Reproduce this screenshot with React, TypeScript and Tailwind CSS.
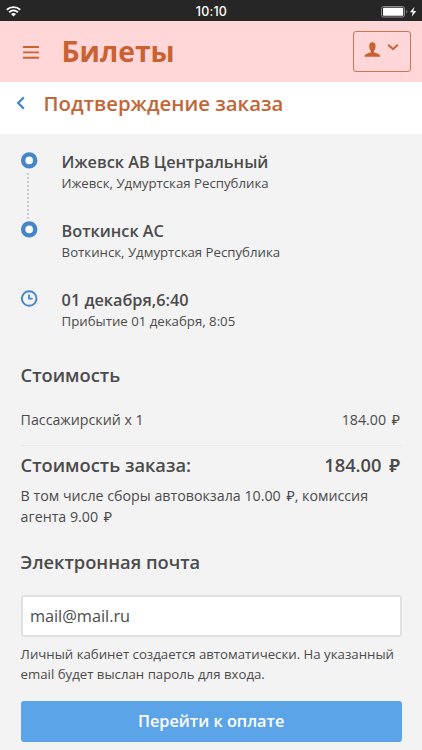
import type { ReactNode } from 'react';

function Stop({ title, subtitle, icon, line }: { title: string; subtitle: string; icon: ReactNode; line?: boolean }) {
  return (
    <div className="flex h-[69.3px]">
      <div className="flex w-[41px] shrink-0 flex-col items-start">
        {icon}
        {line && <div className="ml-[6.5px] mt-[4px] h-[46px] border-l-2 border-dotted border-[#cfcccb]" />}
      </div>
      <div>
        <h3 className="h-[21px] whitespace-nowrap text-[16.25px] font-semibold leading-[21px]">{title}</h3>
        <p className="h-[20px] whitespace-nowrap text-[13.23px] leading-[20px]">{subtitle}</p>
      </div>
    </div>
  );
}

const ring = (
  <svg className="size-[17px] shrink-0" viewBox="0 0 17 17">
    <circle cx="8.2" cy="8.4" r="6" fill="white" stroke="#4486c8" strokeWidth="4.4" />
  </svg>
);

const clock = (
  <svg className="size-[17px]" viewBox="0 0 17 17" fill="none" stroke="#4486c8">
    <circle cx="8.2" cy="8.5" r="7.3" strokeWidth="1.9" />
    <path d="M8 4.6V8.7H11.6" strokeWidth="1.8" />
  </svg>
);

export default function App() {
  return (
    <div className="flex h-[750px] w-[422px] flex-col overflow-hidden bg-[#f3f3f3] font-['Open_Sans','Noto_Sans',sans-serif] text-[#4b4b4b]">
      <div className="grid h-[21px] shrink-0 grid-cols-3 items-center bg-[#262626] text-white">
        <svg className="ml-[6px] h-[11px] w-[15px]" viewBox="0 0 15 11" fill="none" stroke="white">
          <path d="M.8 3.7C4.7.3 10.3.3 14.2 3.7" strokeWidth="1.9" />
          <path d="M3.1 6.2C5.7 4 9.3 4 11.9 6.2" strokeWidth="1.8" />
          <path d="M5 8C6.5 6.7 8.5 6.7 10 8L7.5 10.6Z" fill="white" stroke="none" />
        </svg>
        <span className="pl-px pt-px text-center font-[Inter,sans-serif] text-[12.5px] font-medium leading-[21px] tracking-[0.2px]">10:10</span>
        <svg className="ml-auto mr-[3px] h-[13px] w-[41px]" viewBox="0 0 41 13">
          <rect x="3.5" y="1.5" width="23" height="10.5" rx="2" fill="none" stroke="#8b8b8b" />
          <rect x="5" y="2.8" width="20.2" height="7.9" rx=".7" fill="white" />
          <path d="M28.3 5v3.4q1-.5 1-1.7t-1-1.7" fill="#8b8b8b" />
          <path d="M36.5 1.7L32 7.2h2.8l-1.2 4.6 4.7-5.8h-3z" fill="white" />
        </svg>
      </div>

      <header className="flex h-[60.5px] shrink-0 items-start bg-[#ffd7d9] pl-[23px] text-[#c86233]">
        <svg className="mt-[24px] h-[15px] w-[16px]" viewBox="0 0 16 15" stroke="currentColor" strokeWidth="1.9">
          <path d="M0 2h16M0 7.4h16M0 12.7h16" />
        </svg>
        <h1 className="ml-[22.5px] mt-[10px] text-[28.3px] font-bold leading-[40px]">Билеты</h1>
        <button className="ml-auto mr-[11px] mt-[10px] flex h-[41px] w-[58px] items-start rounded-[3px] border border-[#cf754f] pl-[9.5px] pt-[10px]">
          <svg className="h-[15px] w-[17px]" viewBox="0 0 17 15" fill="currentColor">
            <path d="M5.3 3.2C5.3 1.3 6.3.3 8.4.3s3.1 1 3.1 2.9v1.9c0 1.6-.6 2.7-1.5 3.7v1.3c.3.6 1.6.9 3.2 1.4 2.1.7 3 1.5 3.1 3.2H.4c.1-1.7 1-2.5 3.1-3.2 1.6-.5 2.9-.8 3.2-1.4V8.8c-.9-1-1.4-2.1-1.4-3.7z" />
          </svg>
          <svg className="ml-[6px] mt-px h-[8px] w-[12px]" viewBox="0 0 12 8" fill="none" stroke="currentColor" strokeWidth="2">
            <path d="M1.2 1.7L6 6.2l4.8-4.5" />
          </svg>
        </button>
      </header>

      <div className="flex h-[52px] shrink-0 items-start bg-white pl-[16px] pt-[7.5px]">
        <svg className="mt-[7px] h-[14px] w-[9px]" viewBox="0 0 9 14" fill="none" stroke="#4486c8" strokeWidth="2.2">
          <path d="M7.8 1.4L2.2 7l5.6 5.6" />
        </svg>
        <h2 className="ml-[18.5px] whitespace-nowrap text-[20.35px] font-semibold leading-[28px] text-[#c26636]">Подтверждение заказа</h2>
      </div>

      <main className="pl-[20.6px] pr-[20.4px] pt-[18.4px]">
        <Stop title="Ижевск АВ Центральный" subtitle="Ижевск, Удмуртская Республика" icon={ring} line />
        <Stop title="Воткинск АС" subtitle="Воткинск, Удмуртская Республика" icon={ring} />
        <Stop title="01 декабря,6:40" subtitle="Прибытие 01 декабря, 8:05" icon={clock} />

        <h2 className="mt-[2.1px] h-[26px] text-[18.3px] font-semibold leading-[26px]">Стоимость</h2>
        <div className="mt-[22px] flex h-[36px] justify-between border-b border-[#e9e9e9] pr-[1.5px] text-[14.22px] leading-[20px]">
          <span>Пассажирский x 1</span>
          <span>184.00 <span className="ml-[2px]">₽</span></span>
        </div>
        <div className="mt-[6.5px] flex h-[26px] justify-between pr-[1.5px] text-[18.3px] font-semibold leading-[26px]">
          <span>Стоимость заказа:</span>
          <span>184.00 <span className="ml-[3px]">₽</span></span>
        </div>
        <p className="mt-[6.5px] h-[43px] whitespace-nowrap text-[14.24px] leading-[21.3px]">
          В том числе сборы автовокзала 10.00 <span className="ml-[2px]">₽</span>, комиссия
          <br />
          агента 9.00 <span className="ml-[2px]">₽</span>
        </p>
        <h2 className="mt-[21px] h-[26px] text-[18.3px] font-semibold leading-[26px]">Электронная почта</h2>
        <input
          className="mt-[20.2px] block h-[42px] w-full rounded-[3px] border-2 border-[#e3e1df] bg-white px-[7.3px] text-[16.3px] outline-none"
          defaultValue="mail@mail.ru"
        />
        <p className="mt-[6.5px] whitespace-nowrap text-[13.23px] leading-[20.5px]">
          Личный кабинет создается автоматически. На указанный
          <br />
          email будет выслан пароль для входа.
        </p>
        <button className="mt-[16.3px] block h-[41px] w-full rounded-[3px] bg-[#5ba4e8] text-[16.3px] font-semibold text-white">Перейти к оплате</button>
      </main>
    </div>
  );
}
